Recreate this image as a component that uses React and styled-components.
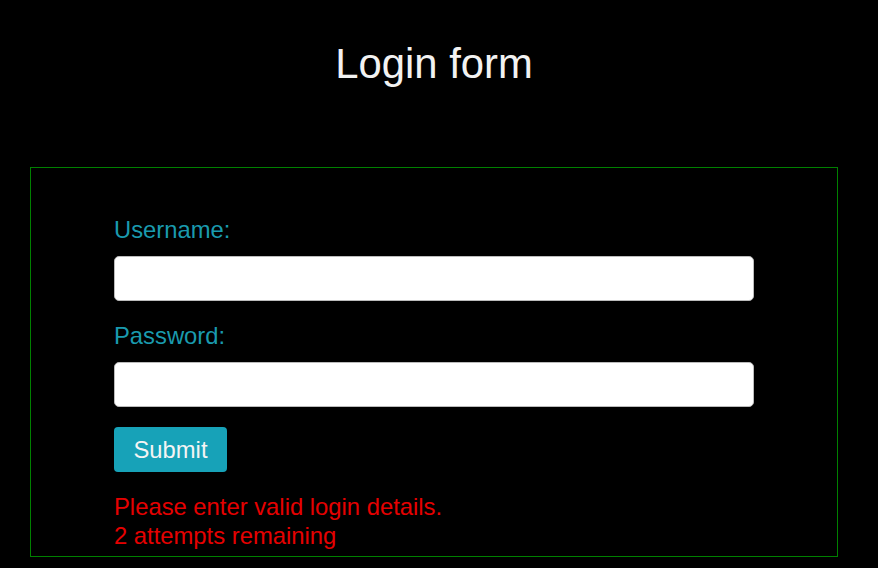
import React from "react";
import styled, { createGlobalStyle } from "styled-components";

const GlobalStyle = createGlobalStyle`
	html, body {
		margin: 0;
		padding: 0;
		background: #000;
	}
	body {
		font-family: "Liberation Sans", Arial, sans-serif;
		min-height: 568px;
	}
`;

function App() {
	return (
		<>
			<GlobalStyle />
			<Page>
				<Title>Login form</Title>
				<FormBox>
					<Form onSubmit={(e) => e.preventDefault()}>
						<Label htmlFor="username">Username:</Label>
						<Input id="username" type="text" />
						<Label htmlFor="password" $spaced>
							Password:
						</Label>
						<Input id="password" type="password" />
						<SubmitButton type="submit">Submit</SubmitButton>
						<ErrorText>
							Please enter valid login details.
							<br />2 attempts remaining
						</ErrorText>
					</Form>
				</FormBox>
			</Page>
		</>
	);
}

const Page = styled.div`
	width: 808px;
	margin-left: 30px;
	padding-top: 40px;
`;

const Title = styled.h1`
	margin: 0 0 80px;
	text-align: center;
	color: #f2f2f2;
	font-family: "Liberation Sans", Arial, sans-serif;
	font-size: 41.8px;
	font-weight: normal;
	line-height: 47px;
`;

const FormBox = styled.div`
	border: 1px solid green;
	padding: 48px 0 6px;
`;

const Form = styled.form`
	width: 640px;
	margin: 0 auto;
	display: flex;
	flex-direction: column;
	align-items: flex-start;
`;

const Label = styled.label`
	color: #1a9aae;
	font-size: 23.8px;
	line-height: 27px;
	margin-top: ${(p) => (p.$spaced ? "21px" : "0")};
	margin-bottom: 13px;
`;

const Input = styled.input`
	box-sizing: border-box;
	width: 640px;
	height: 45px;
	border: 1px solid #bbb;
	border-radius: 5px;
	background: #fff;
	font-size: 20px;
	padding: 0 10px;
`;

const SubmitButton = styled.button`
	margin-top: 20px;
	width: 113px;
	height: 45px;
	border: none;
	border-radius: 4px;
	background: #17a2b8;
	color: #f4f4f4;
	font-family: "Liberation Sans", Arial, sans-serif;
	font-size: 23.8px;
	cursor: pointer;
`;

const ErrorText = styled.p`
	margin: 20px 0 0;
	color: #e60000;
	font-size: 23.8px;
	line-height: 29px;
`;

export default App;
